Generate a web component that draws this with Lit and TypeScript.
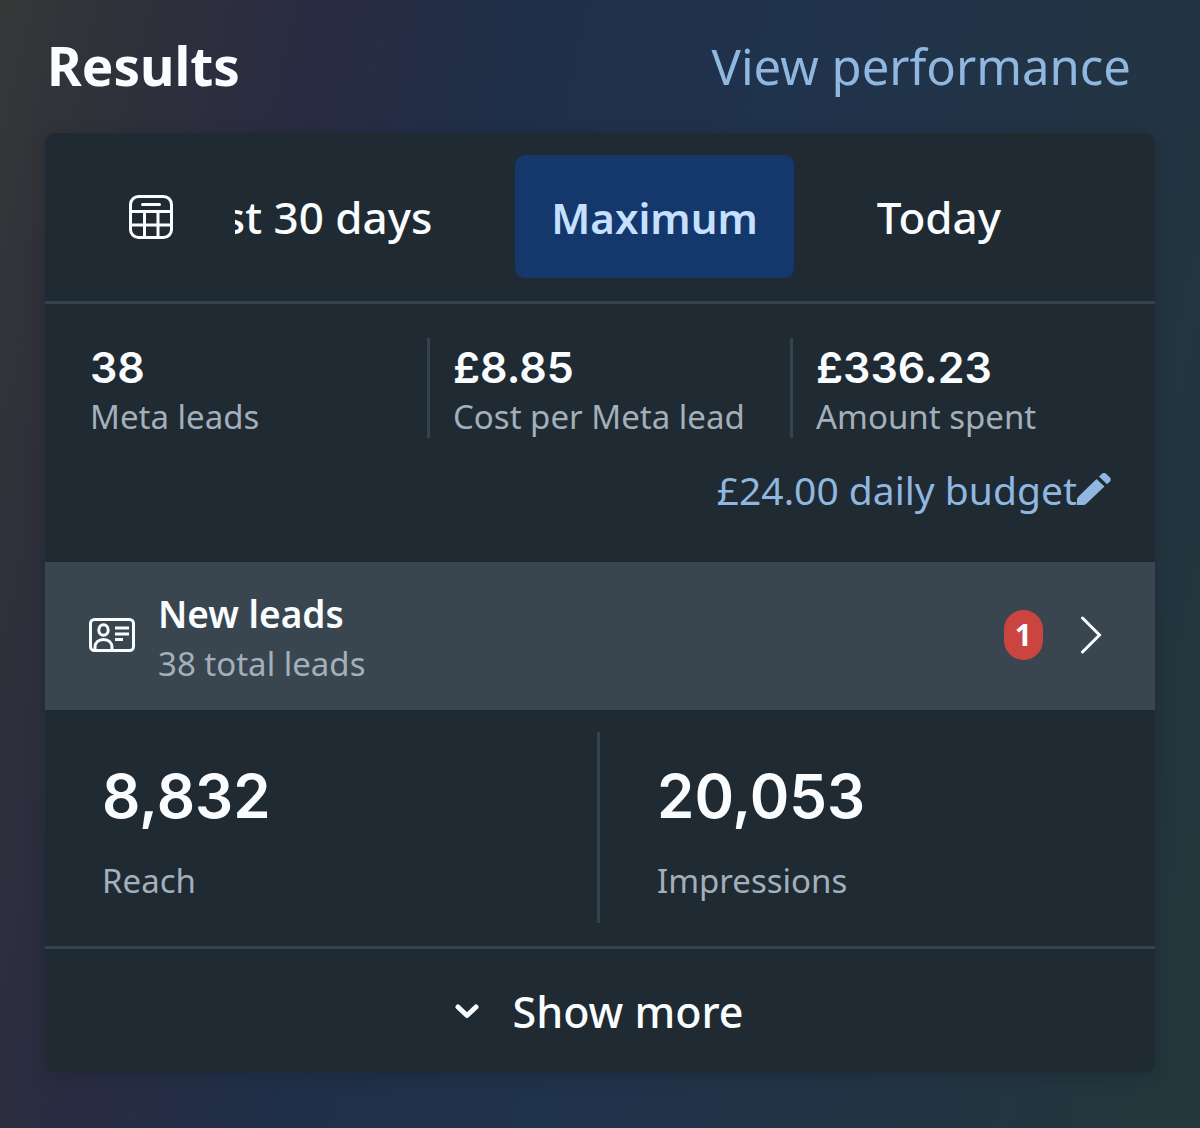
import { LitElement, html, css, svg } from "lit";
import { customElement, state } from "lit/decorators.js";

interface Metric {
  value: string;
  label: string;
}

const RANGES = ["Last 30 days", "Maximum", "Today"];

const SUMMARY: Metric[] = [
  { value: "38", label: "Meta leads" },
  { value: "£8.85", label: "Cost per Meta lead" },
  { value: "£336.23", label: "Amount spent" },
];

const TOTALS: Metric[] = [
  { value: "8,832", label: "Reach" },
  { value: "20,053", label: "Impressions" },
];

const calendarIcon = svg`
  <rect x="1.5" y="1.5" width="41" height="41" rx="8" />
  <path d="M13.500 9.500H30.500M2 16.500H42M2 30H42M15.500 16.500V42M29 16.500V42" />`;

const contactIcon = svg`
  <rect x="1.5" y="1.5" width="43" height="31" rx="4" />
  <ellipse cx="14.5" cy="12" rx="4.7" ry="5.300" />
  <path d="M6 32V29.500C6 24.500 9.500 21.500 14.500 21.500S23 24.500 23 29.500V32" />
  <path d="M26 10H40M26 16H40M26 21.500H34" />`;

@customElement("app-root")
export class AppRoot extends LitElement {
  static styles = css`
    :host {
      display: block;
      min-height: 100vh;
      box-sizing: border-box;
      padding: 30px 45px 56px;
      font-family: "Noto Sans", "Liberation Sans", sans-serif;
      color: #fafdff;
      background: linear-gradient(
        103deg,
        #363838 0%,
        #31313a 8%,
        #292c42 22%,
        #202f48 36%,
        #20334c 55%,
        #233443 80%,
        #23383b 100%
      );
    }
    * {
      box-sizing: border-box;
    }
    button {
      font: inherit;
      color: inherit;
      background: none;
      border: 0;
      padding: 0;
      cursor: pointer;
    }
    a {
      color: #8fb7e0;
      text-decoration: none;
    }
    svg {
      display: block;
      fill: none;
      stroke: currentColor;
      flex: none;
    }
    .heading {
      display: flex;
      align-items: center;
      justify-content: space-between;
      padding: 0 24px 0 2px;
      margin-bottom: 31px;
    }
    .title {
      margin: 0;
      font-size: 53px;
      line-height: 72px;
      font-weight: 700;
    }
    .performance {
      font-size: 49px;
      line-height: 72px;
    }
    .card {
      background: #202a32;
      border-radius: 10px;
      box-shadow: 0 4px 16px rgba(20, 32, 42, 0.4);
    }
    .ranges {
      display: flex;
      align-items: center;
      padding: 22px 0 23px 84px;
      border-bottom: 3px solid #36434c;
    }
    .track {
      flex: 1;
      min-width: 0;
      margin-left: 62px;
      display: flex;
      justify-content: flex-end;
      gap: 47px;
      padding-right: 118px;
      overflow: hidden;
    }
    .range {
      flex: none;
      padding: 2px 36px 0;
      border-radius: 10px;
      font-size: 44px;
      line-height: 121px;
      font-weight: 500;
      white-space: nowrap;
    }
    .range.selected {
      background: #15386c;
      color: #c5e1ff;
      font-size: 42px;
      font-weight: 600;
    }
    .summary {
      display: grid;
      grid-template-columns: repeat(3, 1fr);
      margin: 0;
      padding: 34px 2px 0 19px;
    }
    .metric {
      display: flex;
      flex-direction: column-reverse;
      justify-content: flex-end;
      padding: 0 0 0 26px;
    }
    .metric + .metric {
      border-left: 3px solid #36434c;
      padding-left: 23px;
    }
    dd {
      margin: 0;
    }
    .value {
      font-family: Inter, "Noto Sans", sans-serif;
      font-size: 43px;
      line-height: 58px;
      font-weight: 600;
    }
    .label {
      font-size: 33px;
      line-height: 42px;
      color: #a3afba;
    }
    .budget {
      display: flex;
      justify-content: flex-end;
      padding: 26px 44px 46px;
    }
    .edit {
      display: flex;
      align-items: center;
      font-size: 39px;
      line-height: 52px;
    }
    .leads {
      display: flex;
      align-items: center;
      width: 100%;
      padding: 23px 53px 25px 44px;
      background: #394650;
      text-align: left;
    }
    .names {
      flex: 1;
      padding-left: 23px;
    }
    .name,
    .count {
      display: block;
    }
    .name {
      font-size: 37px;
      line-height: 58px;
      font-weight: 600;
    }
    .count {
      font-size: 33px;
      line-height: 42px;
      color: #a3afba;
    }
    .badge {
      padding: 0 11px;
      border-radius: 20px;
      background: #cc4440;
      font-size: 30px;
      line-height: 50px;
      font-weight: 700;
      margin-right: 37px;
    }
    .totals {
      display: grid;
      grid-template-columns: repeat(2, 1fr);
      margin: 0;
      padding: 22px 0 23px;
      border-bottom: 3px solid #36434c;
    }
    .total {
      display: flex;
      flex-direction: column-reverse;
      justify-content: flex-end;
      padding: 24px 57px 21px;
      gap: 24px;
    }
    .total + .total {
      border-left: 3px solid #36434c;
      margin-left: -3px;
    }
    .total .value {
      font-size: 60px;
      line-height: 80px;
    }
    .more {
      display: flex;
      align-items: center;
      justify-content: center;
      gap: 34px;
      width: 100%;
      padding: 2px 2px 0 0;
      font-size: 43px;
      line-height: 121px;
      font-weight: 500;
    }
  `;

  @state() private selected = "Maximum";

  private metric(item: Metric, kind: string) {
    return html`<div class=${kind}>
      <dt class="label">${item.label}</dt>
      <dd class="value">${item.value}</dd>
    </div>`;
  }

  render() {
    return html`
      <header class="heading">
        <h1 class="title">Results</h1>
        <a class="performance" href="#performance">View performance</a>
      </header>
      <main class="card">
        <div class="ranges">
          <button aria-label="Choose dates">
            <svg width="44" height="44" viewBox="0 0 44 44" stroke-width="3" stroke-linecap="round">
              ${calendarIcon}
            </svg>
          </button>
          <div class="track">
            ${RANGES.map(
              (range) => html`<button
                class="range ${range === this.selected ? "selected" : ""}"
                aria-pressed=${range === this.selected}
                @click=${() => (this.selected = range)}
              >${range}</button>`
            )}
          </div>
        </div>
        <dl class="summary">${SUMMARY.map((item) => this.metric(item, "metric"))}</dl>
        <div class="budget">
          <a class="edit" href="#budget">
            £24.00 daily budget
            <svg width="34" height="34" viewBox="0 0 34 34" aria-hidden="true">
              <path
                fill="currentColor"
                stroke="none"
                d="M0 32V26.500Q0 25 1.500 23.500L19.500 6L27.500 13.500L9 31Q8 32 6.500 32ZM22 3.500L25 .7Q27 -.8 29 .7L33 4.500Q34.500 6.500 33 8.500L30 11.300Z"
              />
            </svg>
          </a>
        </div>
        <button class="leads">
          <svg width="46" height="34" viewBox="0 0 46 34" stroke-width="3">${contactIcon}</svg>
          <span class="names">
            <span class="name">New leads</span>
            <span class="count">38 total leads</span>
          </span>
          <span class="badge">1</span>
          <svg width="22" height="38" viewBox="0 0 22 38" stroke-width="3" stroke-linecap="round">
            <path d="M2.500 2L19.500 19L2.500 36" />
          </svg>
        </button>
        <dl class="totals">${TOTALS.map((item) => this.metric(item, "total"))}</dl>
        <button class="more">
          <svg width="24" height="15" viewBox="0 0 24 15" stroke-width="5" stroke-linecap="round" stroke-linejoin="round">
            <path d="M3 3L12 11.500L21 3" />
          </svg>
          Show more
        </button>
      </main>
    `;
  }
}
